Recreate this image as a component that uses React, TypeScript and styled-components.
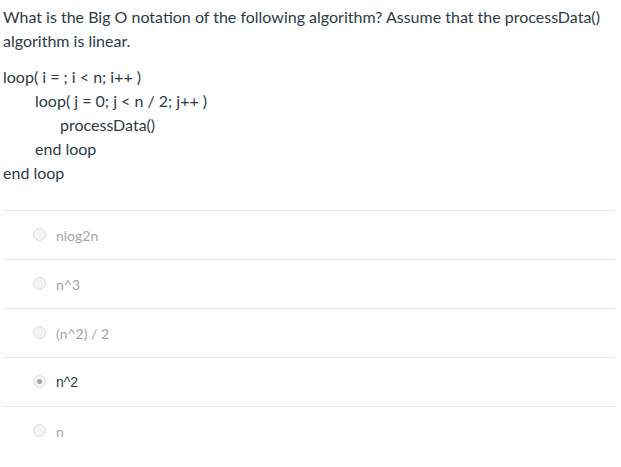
import React from "react";
import styled, { createGlobalStyle } from "styled-components";

const Global = createGlobalStyle`
  html, body { margin: 0; padding: 0; background: #fff; }
  body { font-family: Lato, "Open Sans", sans-serif; }
`;

const Page = styled.div`
  width: 621px;
  height: 467px;
  overflow: hidden;
  padding: 0 6px 0 3px;
  box-sizing: border-box;
  color: #2d3b45;
`;

const Question = styled.div`
  font-family: Lato, sans-serif;
  font-size: 16px;
  line-height: 24px;
  padding-top: 5px;
`;

const Para = styled.p`
  margin: 0 0 12px 0;
`;

const CodeLine = styled.div<{ $indent: number }>`
  padding-left: ${(p) => p.$indent}px;
  white-space: pre;
`;

const Answers = styled.div`
  margin-top: 25px;
`;

const Row = styled.label`
  display: flex;
  align-items: center;
  height: 48px;
  border-top: 1px solid #e6e6e6;
  padding-left: 30px;
  box-sizing: content-box;
`;

const Radio = styled.span<{ $checked?: boolean }>`
  width: 13px;
  height: 13px;
  border-radius: 50%;
  box-sizing: border-box;
  border: 1px solid #dcdcdc;
  background: #f4f4f4;
  display: flex;
  align-items: center;
  justify-content: center;
  margin-right: 10px;
  margin-top: -1px;
  &::after {
    content: "";
    width: 5px;
    height: 5px;
    border-radius: 50%;
    background: ${(p) => (p.$checked ? "#a4a4a4" : "transparent")};
  }
`;

const AnswerText = styled.span<{ $checked?: boolean }>`
  font-family: ${(p) => (p.$checked ? '"Liberation Sans", Arial, sans-serif' : "Lato, sans-serif")};
  font-size: 14px;
  color: ${(p) => (p.$checked ? "#2d3b45" : "#a5a5a5")};
`;

const code: [number, string][] = [
  [0, "loop( i = ; i < n; i++ )"],
  [32, "loop( j = 0; j < n / 2; j++ )"],
  [57, "processData()"],
  [32, "end loop"],
  [0, "end loop"],
];

const answers = [
  { text: "nlog2n", checked: false },
  { text: "n^3", checked: false },
  { text: "(n^2) / 2", checked: false },
  { text: "n^2", checked: true },
  { text: "n", checked: false },
];

export default function App() {
  return (
    <Page>
      <Global />
      <Question>
        <Para>
          What is the Big O notation of the following algorithm? Assume that the processData()
          algorithm is linear.
        </Para>
        {code.map(([ind, t], i) => (
          <CodeLine key={i} $indent={ind}>
            {t}
          </CodeLine>
        ))}
      </Question>
      <Answers>
        {answers.map((a, i) => (
          <Row key={i}>
            <Radio $checked={a.checked} />
            <AnswerText $checked={a.checked}>{a.text}</AnswerText>
          </Row>
        ))}
      </Answers>
    </Page>
  );
}
